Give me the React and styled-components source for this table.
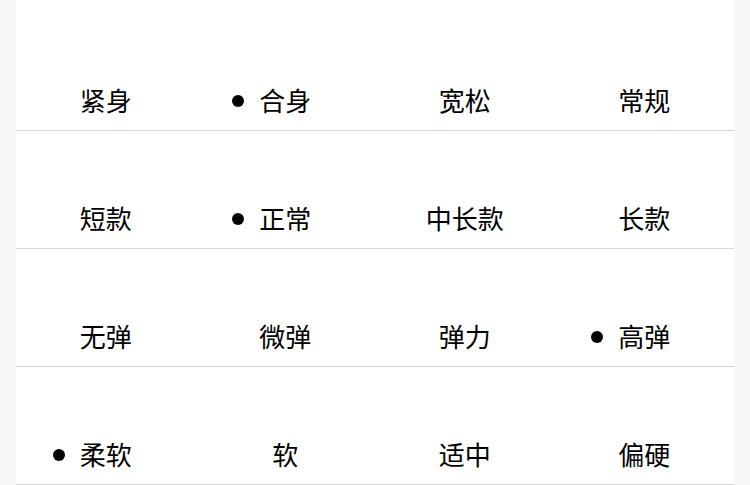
import styled, { createGlobalStyle } from 'styled-components';

const GlobalStyle = createGlobalStyle`
    body {
        margin:0;
        background-color:#f7f7f7;
        font-family:"Noto Sans CJK SC", "Noto Sans", sans-serif;
    }
`
const Panel = styled.div`
    margin:0 16px;
    background-color:#fff;
    padding-top:13px;
`
const Row = styled.div`
    display:grid;
    grid-template-columns:repeat(4, 1fr);
    height:117px;
    border-bottom:1px solid #d6d6d6;
`
const Cell = styled.div`
    display:flex;
    justify-content:center;
    align-items:flex-end;
    padding-bottom:12px;
`
const Label = styled.span`
    position:relative;
    font-size:26px;
    line-height:36px;
    color:#000;

    &::before{
        content:'';
        display:${p => (p.$active ? 'block' : 'none')};
        position:absolute;
        left:-27px;
        top:50%;
        width:12px;
        height:12px;
        margin-top:-5px;
        border-radius:50%;
        background-color:#000;
    }
`

const rows = [
    { items: ['紧身', '合身', '宽松', '常规'], active: 1 },
    { items: ['短款', '正常', '中长款', '长款'], active: 1 },
    { items: ['无弹', '微弹', '弹力', '高弹'], active: 3 },
    { items: ['柔软', '软', '适中', '偏硬'], active: 0 },
]

const App = () => {
    return (
        <>
            <GlobalStyle />
            <Panel>
                {rows.map((row, i) => (
                    <Row key={i}>
                        {row.items.map((item, j) => (
                            <Cell key={item}>
                                <Label $active={j === row.active}>{item}</Label>
                            </Cell>
                        ))}
                    </Row>
                ))}
            </Panel>
        </>
    )
}

export default App
